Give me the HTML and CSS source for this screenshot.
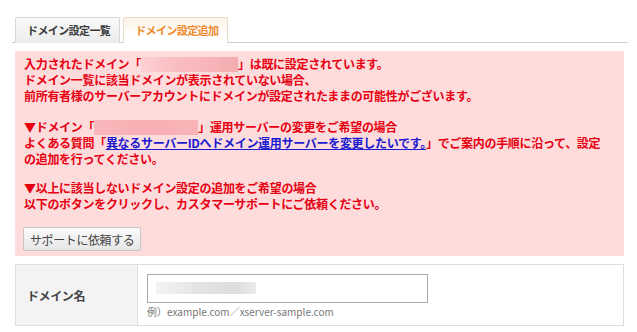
FILE: index.html
```html
<!DOCTYPE html>
<html lang="ja">
<head>
<meta charset="utf-8">
<link rel="stylesheet" href="styles.css">
</head>
<body>
<div class="page">
  <ul class="tabs">
    <li class="tab">ドメイン設定一覧</li>
    <li class="tab active">ドメイン設定追加</li>
  </ul>
  <div class="content">
    <div class="alert">
      <p>入力されたドメイン「<span class="redact r1"></span>」は既に設定されています。<br>ドメイン一覧に該当ドメインが表示されていない場合、<br>前所有者様のサーバーアカウントにドメインが設定されたままの可能性がございます。</p>
      <p class="tight">▼ドメイン「<span class="redact r2"></span>」運用サーバーの変更をご希望の場合<br>よくある質問「<a class="link" href="#">異なるサーバーIDへドメイン運用サーバーを変更したいです。</a>」でご案内の手順に沿って、設定<br>の追加を行ってください。</p>
      <p>▼以上に該当しないドメイン設定の追加をご希望の場合<br>以下のボタンをクリックし、カスタマーサポートにご依頼ください。</p>
      <button class="btn" type="button">サポートに依頼する</button>
    </div>
    <div class="form-table">
      <div class="label">ドメイン名</div>
      <div class="field">
        <div class="input"><span class="redact r3"></span></div>
        <div class="hint">例）example.com／xserver-sample.com</div>
      </div>
    </div>
  </div>
</div>
</body>
</html>
```
FILE: styles.css
```css
html, body {
  margin: 0;
  background: #fff;
}
body {
  font-family: "Noto Sans CJK JP", "Noto Sans", sans-serif;
  font-size: 12px;
  color: #333;
}
.page {
  padding: 17px 9px 0 12px;
}
.tabs {
  list-style: none;
  margin: 0;
  padding: 0 0 0 3px;
  display: flex;
  gap: 3px;
  border-bottom: 1px solid #d0d0d0;
  height: 25px;
}
.tab {
  box-sizing: border-box;
  height: 26px;
  padding: 0 9px 0 11px;
  line-height: 24px;
  font-size: 11px;
  font-weight: bold;
  letter-spacing: -0.6px;
  color: #3a3a3a;
  border: 1px solid #d6d6d6;
  border-bottom: none;
  background: linear-gradient(#fafafa, #ebebeb);
  border-radius: 2px 2px 0 0;
}
.tab.active {
  color: #f0892a;
  background: linear-gradient(#fdf1e4, #ffffff 70%);
  border-color: #e8dccd;
}
.content {
  margin: 8px 4px 0 3px;
}
.alert {
  background: #fedcdc;
  padding: 5px 9px 5px 9px;
  color: #e60012;
  font-weight: bold;
  line-height: 16px;
  letter-spacing: -0.3px;
}
.alert p {
  margin: 0 0 15px;
}
.alert p.tight {
  margin-bottom: 13px;
}
.redact {
  display: inline-block;
  vertical-align: -3px;
  height: 15px;
}
.r1 {
  width: 97px;
  background: linear-gradient(90deg, #fdd0d2, #f9bcc0 40%, #f8b4b8 75%, #f3acb0);
}
.r2 {
  width: 104px;
  background: linear-gradient(90deg, #f9b8bc, #f8aeb2 50%, #f9b4b8);
}
.r3 {
  width: 100px;
  height: 12px;
  margin: 7px 0 0 8px;
  vertical-align: top;
  background: linear-gradient(90deg, #f4f4f4, #e4e4e4 40%, #dcdcdc 80%, #ececec);
}
.link {
  color: #1a1ad0;
  text-decoration: underline;
}
.btn {
  display: block;
  margin: 0 0 0 -1px;
  height: 24px;
  padding: 0 6px;
  font-family: inherit;
  font-size: 12px;
  letter-spacing: -0.4px;
  color: #444;
  border: 1px solid #c4c4c4;
  border-radius: 2px;
  background: linear-gradient(#fbfbfb, #e6e6e6);
}
.form-table {
  margin-top: 8px;
  display: grid;
  grid-template-columns: 122px 1fr;
  border: 1px solid #dedede;
  height: 60px;
}
.label {
  background: #f3f3f3;
  border-right: 1px solid #dedede;
  display: flex;
  align-items: center;
  padding-left: 11px;
  font-weight: bold;
  letter-spacing: -0.4px;
  color: #444;
}
.field {
  padding: 9px 0 0 9px;
}
.input {
  box-sizing: border-box;
  width: 281px;
  height: 29px;
  border: 1px solid #aaa;
  background: #fff;
}
.hint {
  margin-top: 1px;
  font-size: 10px;
  line-height: 16px;
  color: #777;
}
```
